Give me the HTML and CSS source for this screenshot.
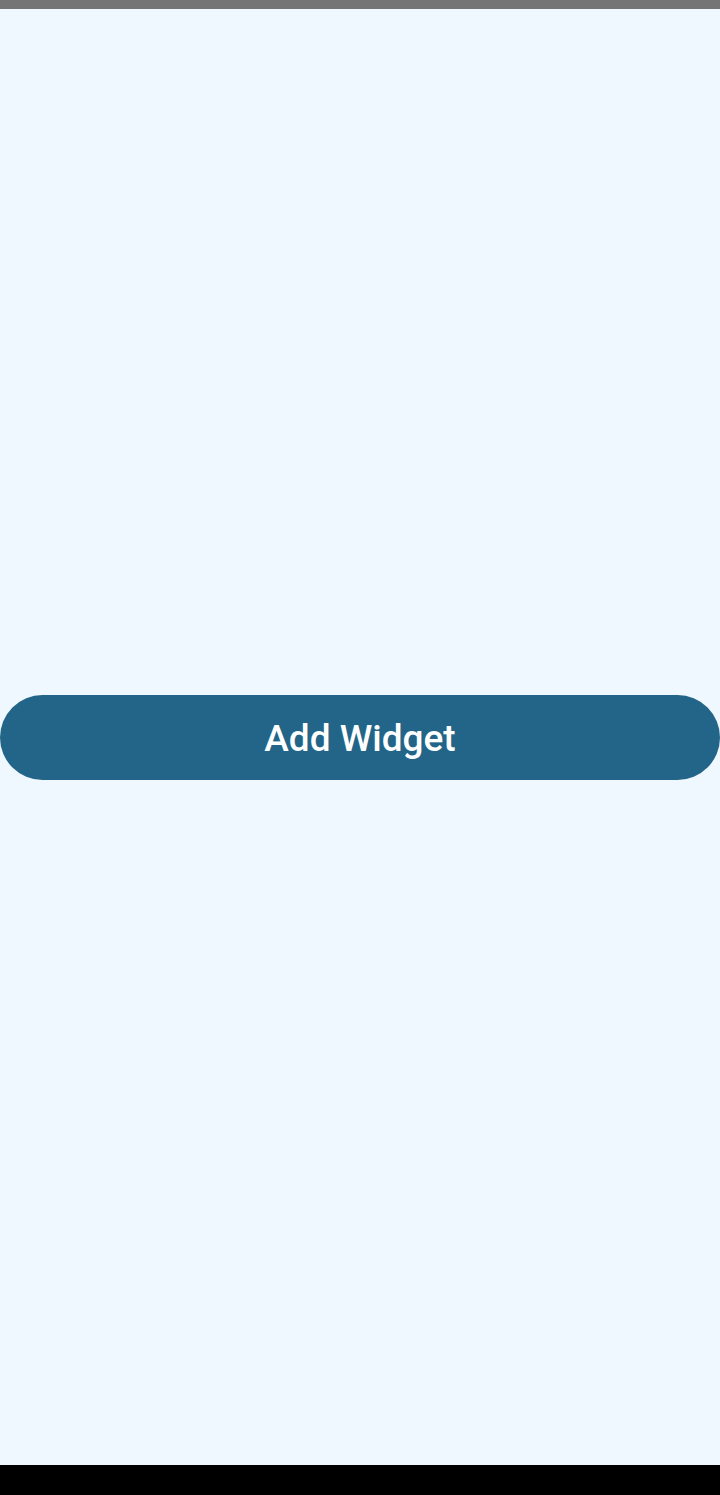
FILE: index.html
```html
<!DOCTYPE html>
<html lang="en">
<head>
<meta charset="utf-8">
<title>Add Widget</title>
<link rel="stylesheet" href="styles.css">
</head>
<body>
<div class="status-bar"></div>
<main class="content">
  <button class="add-btn" type="button">Add Widget</button>
</main>
<div class="nav-bar"></div>
</body>
</html>
```

FILE: styles.css
```css
html, body {
  margin: 0;
  padding: 0;
}
body {
  width: 720px;
  height: 1495px;
  display: flex;
  flex-direction: column;
  background: #f0f8ff;
  font-family: Roboto, "Liberation Sans", sans-serif;
}
.status-bar {
  height: 9px;
  background: #757575;
  flex: none;
}
.content {
  flex: 1;
  display: flex;
  align-items: center;
}
.add-btn {
  width: 100%;
  height: 85px;
  border: none;
  border-radius: 43px;
  background: #226588;
  color: #ffffff;
  font-family: Roboto, "Liberation Sans", sans-serif;
  font-weight: 500;
  font-size: 37px;
  padding: 2px 0 0 0;
  margin: 0;
}
.nav-bar {
  height: 30px;
  background: #000000;
  flex: none;
}
```
